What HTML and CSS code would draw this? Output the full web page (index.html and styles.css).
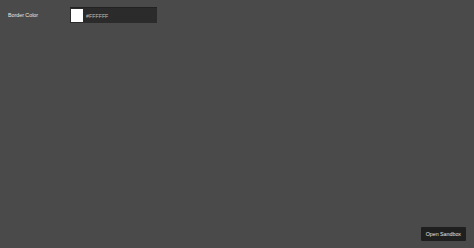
FILE: index.html
```html
<!DOCTYPE html>
<html>
<head>
<meta charset="utf-8">
<link rel="stylesheet" href="styles.css">
</head>
<body>
<div class="panel">
  <div class="field">
    <label class="field-label">Border Color</label>
    <div class="color-input">
      <span class="swatch"></span>
      <span class="hex">#FFFFFF</span>
    </div>
  </div>
</div>
<button class="sandbox-btn">Open Sandbox</button>
</body>
</html>
```

FILE: styles.css
```css
html, body {
  margin: 0;
  height: 100%;
}
body {
  background: #4a4a4a;
  font-family: "Liberation Sans", Arial, sans-serif;
  color: #e6e6e6;
  position: relative;
  overflow: hidden;
}
.panel {
  padding: 7px 8px;
}
.field {
  display: flex;
  align-items: center;
}
.field-label {
  width: 62px;
  font-size: 5.3px;
  color: #e8e8e8;
}
.color-input {
  display: flex;
  align-items: center;
  width: 85px;
  height: 13px;
  padding: 1px;
  background: #2b2b2b;
  border-top: 1px solid #222;
}
.swatch {
  width: 12px;
  height: 13px;
  background: #ffffff;
}
.hex {
  margin-left: 3px;
  font-size: 5.3px;
  color: #bdbdbd;
}
.sandbox-btn {
  position: absolute;
  right: 8px;
  bottom: 7px;
  height: 14px;
  padding: 0 5px;
  border: none;
  border-radius: 1px;
  background: #1f1f1f;
  color: #e6e6e6;
  font-family: "Liberation Sans", Arial, sans-serif;
  font-size: 5.3px;
}
```
